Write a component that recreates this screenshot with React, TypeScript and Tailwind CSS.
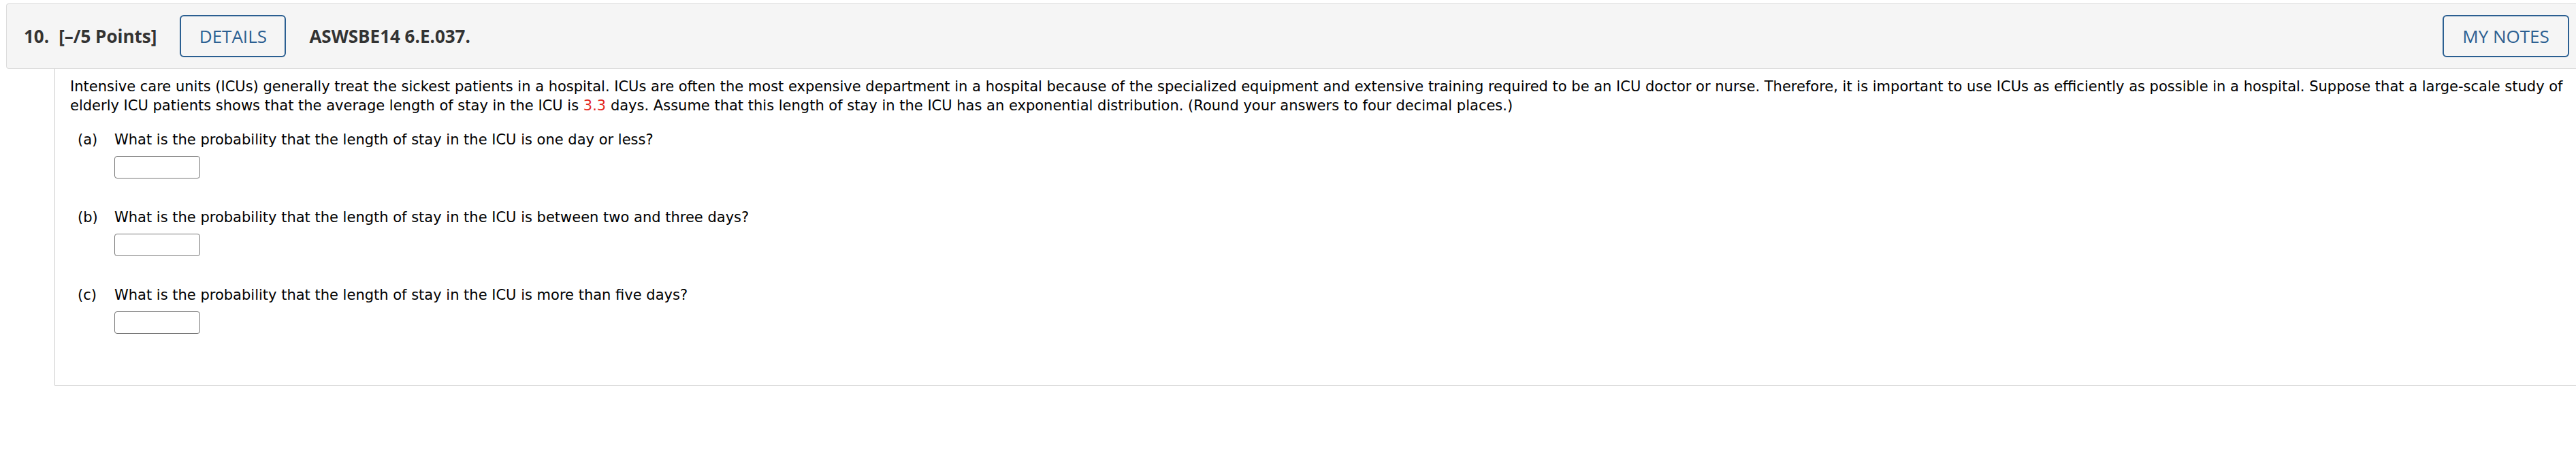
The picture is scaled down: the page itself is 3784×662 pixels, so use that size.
import React from 'react';

const parts = [
  { label: '(a)', text: 'What is the probability that the length of stay in the ICU is one day or less?' },
  { label: '(b)', text: 'What is the probability that the length of stay in the ICU is between two and three days?' },
  { label: '(c)', text: 'What is the probability that the length of stay in the ICU is more than five days?' },
];

export default function App() {
  return (
    <div className="w-full min-h-[662px] overflow-hidden bg-white">
      {/* Question header */}
      <div
        className="ml-[9px] mt-[5px] h-[96px] flex items-center border border-r-0 border-[#dcdcdc] bg-[#f5f5f5] rounded-l-[4px] pl-[25px] pr-[10px] text-[26px] text-[#333333]"
        style={{ fontFamily: '"Open Sans", "Liberation Sans", sans-serif' }}
      >
        <span className="font-bold">10.</span>
        <span className="font-bold ml-[14px]">[–/5 Points]</span>
        <button className="ml-[34px] h-[62px] w-[156px] border-2 border-[#2b5f91] rounded-[6px] text-[#2b5f91] font-medium">
          DETAILS
        </button>
        <span className="font-bold ml-[34px]">ASWSBE14 6.E.037.</span>
        <button className="ml-auto h-[62px] w-[186px] border-2 border-[#2b5f91] rounded-[6px] text-[#2b5f91] font-medium">
          MY NOTES
        </button>
      </div>

      {/* Question body */}
      <div
        className="ml-[80px] border-l border-b border-[#cccccc] pl-[22px] pt-[12px] pb-[75px] text-[21px] leading-[28px] text-black"
        style={{ fontFamily: '"DejaVu Sans", Verdana, sans-serif' }}
      >
        <p>
          Intensive care units (ICUs) generally treat the sickest patients in a hospital. ICUs are often the most expensive
          department in a hospital because of the specialized equipment and extensive training required to be an ICU doctor
          or nurse. Therefore, it is important to use ICUs as efficiently as possible in a hospital. Suppose that a
          large-scale study of elderly ICU patients shows that the average length of stay in the ICU is{' '}
          <span className="text-[#e3281f]">3.3</span> days. Assume that this length of stay in the ICU has an exponential
          distribution. (Round your answers to four decimal places.)
        </p>

        <div className="mt-[22px] flex flex-col gap-[43px]">
          {parts.map((p) => (
            <div key={p.label} className="flex">
              <span className="w-[65px] pl-[11px] shrink-0">{p.label}</span>
              <div className="flex flex-col">
                <span>{p.text}</span>
                <input
                  type="text"
                  className="mt-[10px] w-[126px] h-[33px] border border-[#767676] rounded-[4px] bg-white"
                />
              </div>
            </div>
          ))}
        </div>
      </div>
    </div>
  );
}
